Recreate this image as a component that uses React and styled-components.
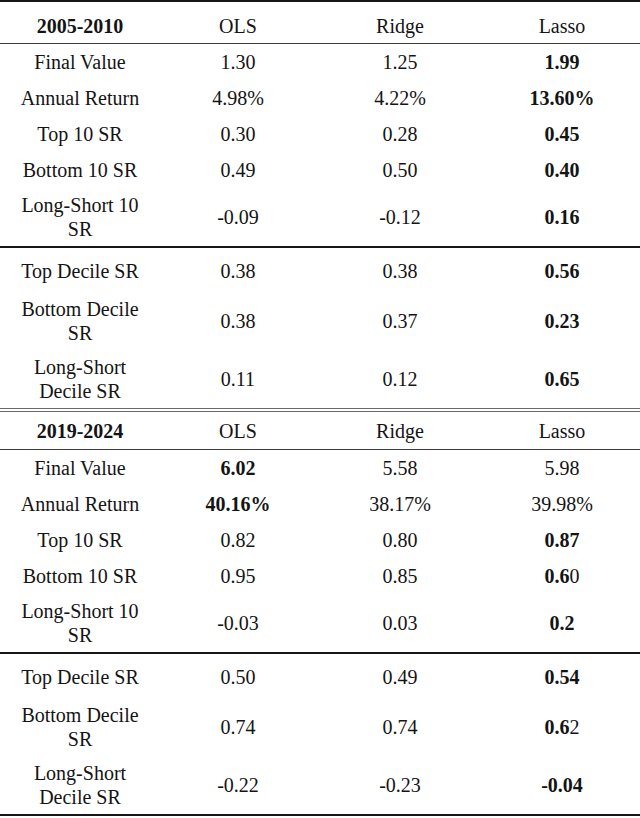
import React from 'react'
import styled, { createGlobalStyle } from 'styled-components'

const GlobalStyle = createGlobalStyle`
  html, body {
    margin: 0;
    padding: 0;
    background: #ffffff;
  }
  body {
    font-family: "DejaVu Serif", serif;
    color: #141414;
  }
`

const Table = styled.div`
  width: 640px;
  display: flex;
  flex-direction: column;
`

const Rule = styled.div`
  height: ${props => props.$size}px;
  background: ${props => props.$color || '#161616'};
`

const DoubleRule = styled.div`
  height: 4px;
  border-top: 1px solid #6a6a6a;
  border-bottom: 1px solid #6a6a6a;
  box-sizing: border-box;
`

const Row = styled.div`
  display: grid;
  grid-template-columns: 160px 156px 168px 156px;
  height: ${props => props.$height}px;
  padding-top: ${props => props.$shift || 0}px;
  box-sizing: border-box;
`

const Cell = styled.div`
  display: flex;
  flex-direction: column;
  align-items: center;
  justify-content: center;
  text-align: center;
  font-family: "Liberation Serif", "Times New Roman", Times, serif;
  font-size: 20px;
  line-height: 24px;
  font-weight: ${props => (props.$bold ? 700 : 400)};
  white-space: nowrap;
`

const Bold = styled.span`
  font-weight: 700;
`

const sections = [
  {
    period: '2005-2010',
    top: [
      { label: ['Final Value'], vals: ['1.30', '1.25', { b: '1.99' }] },
      { label: ['Annual Return'], vals: ['4.98%', '4.22%', { b: '13.60%' }] },
      { label: ['Top 10 SR'], vals: ['0.30', '0.28', { b: '0.45' }] },
      { label: ['Bottom 10 SR'], vals: ['0.49', '0.50', { b: '0.40' }] },
      { label: ['Long-Short 10', 'SR'], vals: ['-0.09', '-0.12', { b: '0.16' }] },
    ],
    deciles: [
      { label: ['Top Decile SR'], vals: ['0.38', '0.38', { b: '0.56' }] },
      { label: ['Bottom Decile', 'SR'], vals: ['0.38', '0.37', { b: '0.23' }] },
      { label: ['Long-Short', 'Decile SR'], vals: ['0.11', '0.12', { b: '0.65' }] },
    ],
  },
  {
    period: '2019-2024',
    top: [
      { label: ['Final Value'], vals: [{ b: '6.02' }, '5.58', '5.98'] },
      { label: ['Annual Return'], vals: [{ b: '40.16%' }, '38.17%', '39.98%'] },
      { label: ['Top 10 SR'], vals: ['0.82', '0.80', { b: '0.87' }] },
      { label: ['Bottom 10 SR'], vals: ['0.95', '0.85', [{ b: '0.6' }, '0']] },
      { label: ['Long-Short 10', 'SR'], vals: ['-0.03', '0.03', { b: '0.2' }] },
    ],
    deciles: [
      { label: ['Top Decile SR'], vals: ['0.50', '0.49', { b: '0.54' }] },
      { label: ['Bottom Decile', 'SR'], vals: ['0.74', '0.74', [{ b: '0.6' }, '2']] },
      { label: ['Long-Short', 'Decile SR'], vals: ['-0.22', '-0.23', { b: '-0.04' }] },
    ],
  },
]

function Value ({ v }) {
  if (Array.isArray(v)) {
    return <span>{v.map((part, i) => <Value key={i} v={part} />)}</span>
  }
  if (typeof v === 'object') return <Bold>{v.b}</Bold>
  return <span>{v}</span>
}

function DataRow ({ row, height, shift }) {
  return (
    <Row $height={height} $shift={shift}>
      <Cell>
        {row.label.map(line => <span key={line}>{line}</span>)}
      </Cell>
      {row.vals.map((v, i) => (
        <Cell key={i}><Value v={v} /></Cell>
      ))}
    </Row>
  )
}

function Section ({ data, headerHeight, headerShift }) {
  return (
    <>
      <Row $height={headerHeight} $shift={headerShift}>
        <Cell $bold>{data.period}</Cell>
        <Cell>OLS</Cell>
        <Cell>Ridge</Cell>
        <Cell>Lasso</Cell>
      </Row>
      <Rule $size={1} $color='#3c3c3c' />
      {data.top.map(row => (
        <DataRow key={row.label.join()} row={row} height={row.label.length > 1 ? 58 : 36} />
      ))}
      <Rule $size={2} />
      {data.deciles.map(row => (
        <DataRow
          key={row.label.join()}
          row={row}
          height={row.label.length > 1 ? 58 : 44}
          shift={row.label.length > 1 ? 0 : 2}
        />
      ))}
    </>
  )
}

export default function App () {
  return (
    <>
      <GlobalStyle />
      <Table>
        <Rule $size={2} />
        <Section data={sections[0]} headerHeight={41} headerShift={6} />
        <DoubleRule />
        <Section data={sections[1]} headerHeight={37} headerShift={1} />
        <Rule $size={2} />
      </Table>
    </>
  )
}
